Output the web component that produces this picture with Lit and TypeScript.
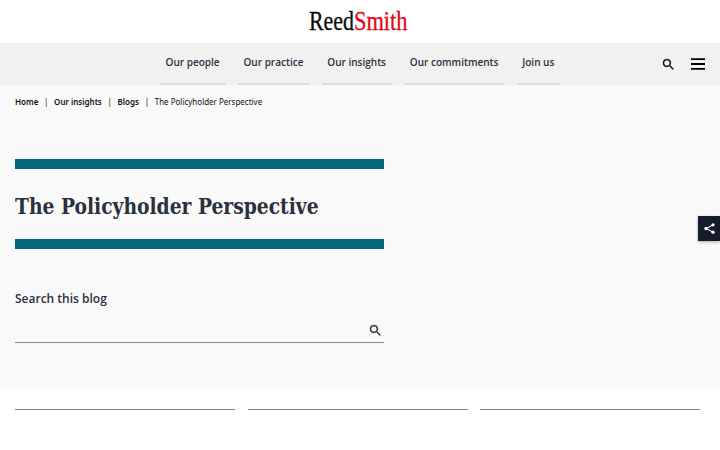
import {css, html, LitElement, svg} from "lit"
import {customElement} from "lit/decorators.js"

const NAV_ITEMS = [
  "Our people",
  "Our practice",
  "Our insights",
  "Our commitments",
  "Join us",
]

const CRUMBS = ["Home", "Our insights", "Blogs"]

const searchPath = svg`<path
  d="M15.5 14h-.79l-.28-.27A6.47 6.47 0 0 0 16 9.5 6.5 6.5 0 1 0 9.5 16c1.61 0 3.09-.59 4.23-1.57l.27.28v.79l5 4.99L20.49 19l-4.99-5zm-6 0C7.01 14 5 11.99 5 9.5S7.01 5 9.5 5 14 7.01 14 9.5 11.99 14 9.5 14z"
/>`

@customElement("site-header")
export class SiteHeader extends LitElement {
  static styles = css`
    :host {
      display: block;
    }
    .brand {
      height: 43px;
      display: flex;
      justify-content: center;
      background: #fff;
    }
    .logo {
      width: 102px;
      height: 43px;
      overflow: visible;
      font-family: "Liberation Serif", serif;
      font-size: 27.5px;
      stroke-width: 0.35px;
    }
    .logo-black {
      fill: #0c0c0c;
      stroke: #0c0c0c;
    }
    .logo-red {
      fill: #e10a17;
      stroke: #e10a17;
    }
    .bar {
      height: 42px;
      box-sizing: border-box;
      display: grid;
      grid-template-columns: 160px 1fr auto;
      padding-right: 15px;
      background: #f1f1f1;
    }
    .nav {
      grid-column: 2;
      display: flex;
      gap: 12.3px;
    }
    .nav-link {
      box-sizing: border-box;
      height: 42px;
      padding: 0 6px 0 5.6px;
      border-bottom: 2px solid #dcdcdd;
      font: 600 10px/39px "Open Sans", sans-serif;
      color: #2b2f3e;
      white-space: nowrap;
      text-decoration: none;
    }
    .tools {
      display: flex;
      align-items: center;
      gap: 15px;
    }
    .tool {
      display: flex;
      padding: 0;
      border: 0;
      background: none;
    }
  `

  render() {
    return html`
      <div class="brand">
        <svg class="logo" viewBox="0 0 102 43">
          <text class="logo-black" x="0" y="30" textLength="45" lengthAdjust="spacingAndGlyphs">Reed</text>
          <text class="logo-red" x="45" y="30" textLength="53.5" lengthAdjust="spacingAndGlyphs">Smith</text>
        </svg>
      </div>
      <div class="bar">
        <nav class="nav">
          ${NAV_ITEMS.map(item => html`<a class="nav-link">${item}</a>`)}
        </nav>
        <div class="tools">
          <button class="tool" aria-label="Search">
            <svg width="15" height="15" viewBox="0 0 24 24" fill="#111" stroke="#111" stroke-width="0.3">
              ${searchPath}
            </svg>
          </button>
          <button class="tool" aria-label="Menu">
            <svg width="14" height="12" viewBox="0 0 14 12" fill="#000">
              <path d="M0 0.3h14v1.8H0zM0 5.1h14v1.8H0zM0 9.9h14v1.8H0z" />
            </svg>
          </button>
        </div>
      </div>
    `
  }
}

@customElement("blog-banner")
export class BlogBanner extends LitElement {
  static styles = css`
    :host {
      display: block;
      box-sizing: border-box;
      height: 304px;
      padding: 0 15px;
      background: #f9f9f9;
    }
    .crumbs {
      display: flex;
      gap: 5.7px;
      height: 34px;
      font: 8px/34px "Noto Sans", sans-serif;
      letter-spacing: -0.01px;
      color: #111;
      white-space: nowrap;
    }
    .crumb {
      font-weight: 600;
    }
    .column {
      width: 368.6px;
      margin-top: 40px;
    }
    .title {
      box-sizing: border-box;
      height: 90px;
      margin: 0;
      border: solid #03697d;
      border-width: 10px 0;
      font: bold 23px/73px "DejaVu Serif Condensed", "DejaVu Serif", serif;
      font-stretch: condensed;
      color: #2b2f3e;
      white-space: nowrap;
    }
    .title-text {
      display: inline-block;
      transform: scaleX(0.904);
      transform-origin: left;
    }
    .search-label {
      display: block;
      margin-top: 40px;
      font: 600 12px/20px "Open Sans", sans-serif;
      color: #2b2f3e;
    }
    .search {
      box-sizing: border-box;
      height: 26px;
      margin-top: 8px;
      padding: 2px 1px 0 0;
      display: flex;
      justify-content: flex-end;
      align-items: center;
      border-bottom: 1px solid #8b8b8e;
    }
  `

  render() {
    return html`
      <div class="crumbs">
        ${CRUMBS.map(
          crumb => html`<span class="crumb">${crumb}</span><span>|</span>`
        )}
        <span>The Policyholder Perspective</span>
      </div>
      <div class="column">
        <h1 class="title">
          <span class="title-text">The Policyholder Perspective</span>
        </h1>
        <label class="search-label">Search this blog</label>
        <div class="search">
          <svg width="15" height="15" viewBox="0 0 24 24" fill="#333" stroke="#333" stroke-width="0.3">
            ${searchPath}
          </svg>
        </div>
      </div>
    `
  }
}

@customElement("app-root")
export class AppRoot extends LitElement {
  static styles = css`
    :host {
      display: block;
      position: relative;
      height: 450px;
      overflow: hidden;
      background: #fff;
    }
    .cards {
      display: grid;
      grid-template-columns: repeat(3, 220px);
      gap: 12.7px;
      padding: 20px 15px 0;
    }
    .card {
      height: 40px;
      border-top: 1px solid #858080;
    }
    .share {
      position: absolute;
      top: 216px;
      right: 0;
      width: 22px;
      height: 25px;
      display: flex;
      align-items: center;
      justify-content: center;
      background: #161b2b;
      box-shadow: 0 1px 3px rgba(0, 0, 0, 0.3);
    }
  `

  render() {
    return html`
      <site-header></site-header>
      <blog-banner></blog-banner>
      <div class="cards">
        <div class="card"></div>
        <div class="card"></div>
        <div class="card"></div>
      </div>
      <div class="share">
        <svg width="11" height="11" viewBox="0 0 10 10" fill="#fff">
          <path d="M8.2 1.7L2 5l6.2 3.3" fill="none" stroke="#fff" />
          <circle cx="8.2" cy="1.7" r="1.5" />
          <circle cx="1.8" cy="5" r="1.5" />
          <circle cx="8.2" cy="8.3" r="1.5" />
        </svg>
      </div>
    `
  }
}
